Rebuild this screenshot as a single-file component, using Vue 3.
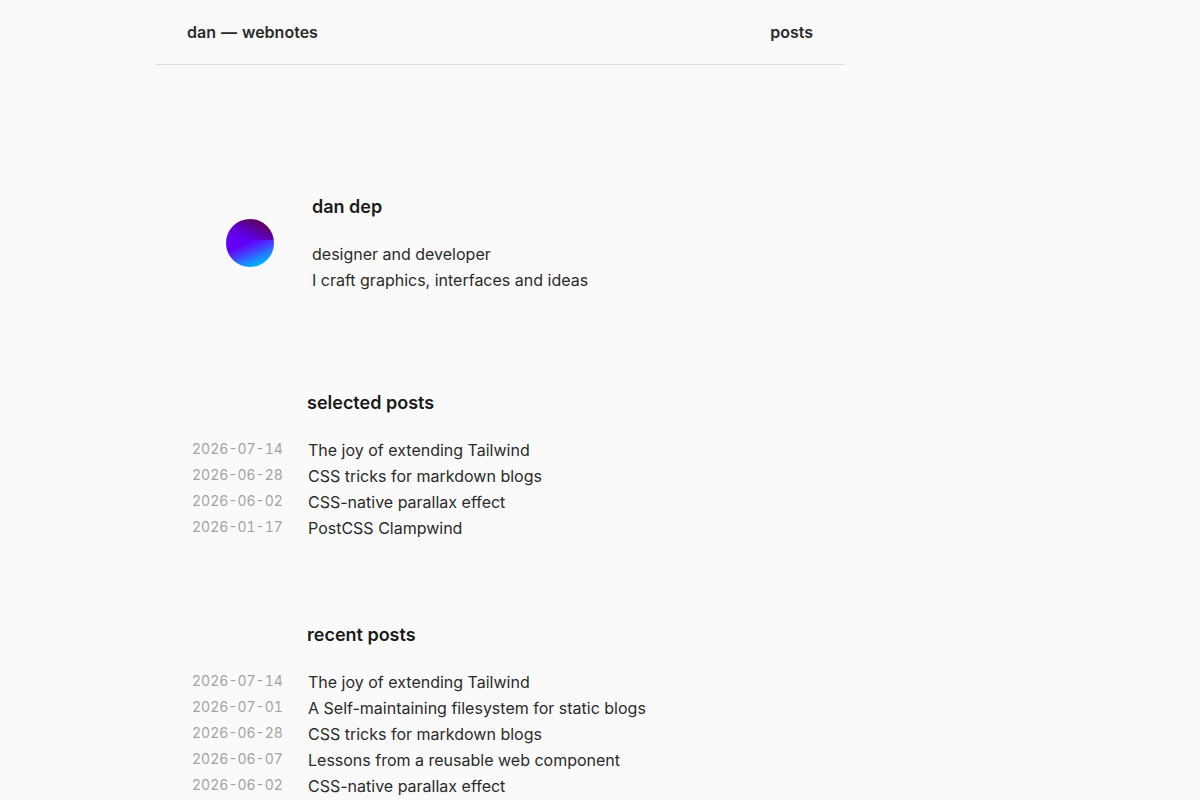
<script setup>
const sections = [
  {
    id: 'selected',
    title: 'selected posts',
    posts: [
      { date: '2026-07-14', title: 'The joy of extending Tailwind' },
      { date: '2026-06-28', title: 'CSS tricks for markdown blogs' },
      { date: '2026-06-02', title: 'CSS-native parallax effect' },
      { date: '2026-01-17', title: 'PostCSS Clampwind' },
    ],
  },
  {
    id: 'recent',
    title: 'recent posts',
    posts: [
      { date: '2026-07-14', title: 'The joy of extending Tailwind' },
      { date: '2026-07-01', title: 'A Self-maintaining filesystem for static blogs' },
      { date: '2026-06-28', title: 'CSS tricks for markdown blogs' },
      { date: '2026-06-07', title: 'Lessons from a reusable web component' },
      { date: '2026-06-02', title: 'CSS-native parallax effect' },
    ],
  },
]
</script>

<template>
  <div class="page">
    <header class="top">
      <a class="nav-link brand" href="#"><span>dan</span><span>—</span><span>webnotes</span></a>
      <nav><a class="nav-link" href="#recent">posts</a></nav>
    </header>
    <main>
      <section class="intro">
        <div class="avatar"></div>
        <div class="bio">
          <h1 class="heading">dan dep</h1>
          <p>designer and developer</p>
          <p>I craft graphics, interfaces and ideas</p>
        </div>
      </section>
      <section v-for="s in sections" :id="s.id" :key="s.id" class="posts">
        <h2 class="heading">{{ s.title }}</h2>
        <ul>
          <li v-for="p in s.posts" :key="p.date">
            <time :datetime="p.date">{{ p.date }}</time>
            <a href="#">{{ p.title }}</a>
          </li>
        </ul>
      </section>
    </main>
  </div>
</template>

<style>
body {
  background: #fafafa;
}
</style>

<style scoped>
.page {
  box-sizing: border-box;
  max-width: 689px;
  margin-left: 13vw;
  font-family: Inter, "Liberation Sans", sans-serif;
  font-size: 16px;
  line-height: 26px;
  color: #2a2a2a;
}
a {
  color: inherit;
  text-decoration: none;
}
.top {
  display: flex;
  justify-content: space-between;
  align-items: center;
  padding: 19px 32px 19px 31px;
  border-bottom: 1px solid #dedede;
}
.nav-link {
  font-weight: 600;
}
.brand {
  display: flex;
  gap: 5px;
}
.heading {
  margin: 0 0 20px;
  font-size: 18px;
  line-height: 28px;
  font-weight: 600;
  color: #1a1a1a;
}
.intro {
  display: flex;
  align-items: center;
  padding: 128px 32px 16px 70px;
  gap: 38px;
}
.avatar {
  flex: none;
  width: 48px;
  height: 48px;
  border-radius: 50%;
  background:
    linear-gradient(205deg, #5c0040 10%, #5e0078 32%, #5c00b4 50%, #6000e4 70%, #6400f4 90%) top / 100% 44% no-repeat,
    linear-gradient(158deg, #6200f8 48%, #4838ff 62%, #2080ff 76%, #00b4ff 88%, #00d8ff 100%);
}
.bio p {
  margin: 0;
}
.posts {
  padding: 80px 32px 0 36px;
}
.posts .heading {
  margin-left: 115px;
}
ul {
  margin: 0;
  padding: 0;
  list-style: none;
}
li {
  display: grid;
  grid-template-columns: 88px 1fr;
  column-gap: 28px;
}
time {
  font-size: 14px;
  line-height: 24px;
  font-variant-numeric: tabular-nums;
  white-space: nowrap;
  color: #a3a3a3;
}
</style>
